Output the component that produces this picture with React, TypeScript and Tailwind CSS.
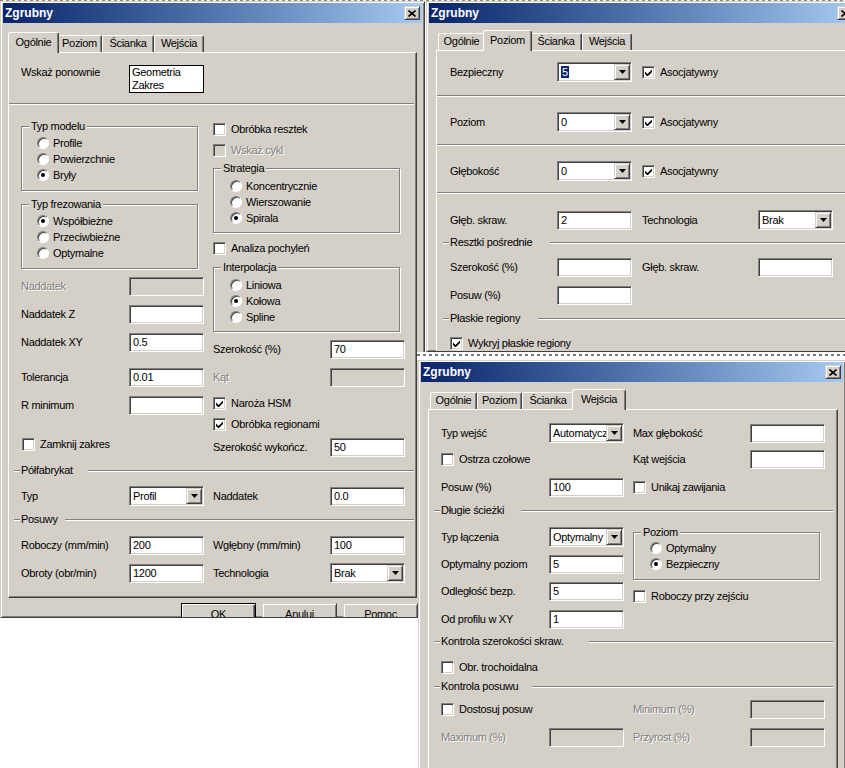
import React from 'react';

const sunken =
  'border border-t-[#808080] border-l-[#808080] border-b-white border-r-white shadow-[inset_1px_1px_0_#404040,inset_-1px_-1px_0_#d4d0c8]';
const raised =
  'border border-t-[#d4d0c8] border-l-[#d4d0c8] border-b-[#404040] border-r-[#404040] shadow-[inset_1px_1px_0_#fff,inset_-1px_-1px_0_#808080]';
const panel =
  'bg-[#d4d0c8] border border-t-white border-l-white border-r-[#404040] border-b-[#404040] shadow-[inset_-1px_-1px_0_#808080]';
const etch = 'h-[2px] border-t border-t-[#808080] border-b border-b-white';
const dis = 'text-[#808080] [text-shadow:1px_1px_0_#fff]';

const TABS = ['Ogólnie', 'Poziom', 'Ścianka', 'Wejścia'];
const TAB_W = ['w-[47px]', 'w-[45px]', 'w-[52px]', 'w-[50px]'];
const TAB_W_SEL = ['w-[51px]', 'w-[49px]', 'w-[56px]', 'w-[54px]'];

function Win({ className, children }: { className: string; children: React.ReactNode }) {
  return (
    <div
      className={`absolute overflow-hidden bg-[#d4d0c8] border border-t-[#d4d0c8] border-l-[#d4d0c8] border-r-[#404040] border-b-[#404040] shadow-[inset_1px_1px_0_#fff,inset_-1px_-1px_0_#808080] px-[2px] pt-[1px] ${className}`}
    >
      {children}
    </div>
  );
}

function TitleBar() {
  return (
    <div className="h-[20px] flex items-center justify-between bg-linear-to-r from-[#0a246a] to-[#a6caf0] pl-[2px] pr-[2px]">
      <span className="text-white font-bold text-[12px] tracking-normal">Zgrubny</span>
      <div className={`w-[16px] h-[14px] flex items-center justify-center bg-[#d4d0c8] ${raised}`}>
        <svg width="8" height="7" viewBox="0 0 8 7">
          <path d="M0.5 0.5 L7.5 6.5 M7.5 0.5 L0.5 6.5" stroke="#000" strokeWidth="1.6" />
        </svg>
      </div>
    </div>
  );
}

function Tabs({ active }: { active: number }) {
  return (
    <div className="flex items-end h-[20px] pl-[2px]">
      {TABS.map((t, i) =>
        i === active ? (
          <div
            key={t}
            className={`${TAB_W_SEL[i]} h-[21px] -mx-[2px] -mb-[1px] relative z-10 bg-[#d4d0c8] border-l border-t border-r border-l-white border-t-white border-r-[#404040] rounded-t-[3px] shadow-[inset_-1px_0_0_#808080] flex justify-center pt-[3px] whitespace-nowrap`}
          >
            {t}
          </div>
        ) : (
          <div
            key={t}
            className={`${TAB_W[i]} h-[17px] bg-[#d4d0c8] border-l border-t border-r border-l-white border-t-white border-r-[#404040] rounded-t-[2px] shadow-[inset_-1px_0_0_#808080] flex justify-center pt-[1px] whitespace-nowrap`}
          >
            {t}
          </div>
        )
      )}
    </div>
  );
}

function Lbl({ children, className = '', disabled = false }: { children: React.ReactNode; className?: string; disabled?: boolean }) {
  return <span className={`shrink-0 whitespace-nowrap ${disabled ? dis : ''} ${className}`}>{children}</span>;
}

function Edit({ value = '', disabled = false }: { value?: string; disabled?: boolean }) {
  return (
    <div className={`w-[75px] h-[19px] shrink-0 flex items-center pl-[3px] ${sunken} ${disabled ? 'bg-[#d4d0c8]' : 'bg-white'}`}>
      {value}
    </div>
  );
}

function Combo({ value, selected = false }: { value: string; selected?: boolean }) {
  return (
    <div className={`w-[75px] h-[20px] shrink-0 flex items-center bg-white p-[1px] ${sunken}`}>
      <div className="flex-1 overflow-hidden whitespace-nowrap pl-[2px]">
        {selected ? <span className="bg-[#0a246a] text-white px-[1px]">{value}</span> : value}
      </div>
      <div className={`w-[16px] h-full shrink-0 flex items-center justify-center bg-[#d4d0c8] ${raised}`}>
        <svg width="7" height="4" viewBox="0 0 7 4">
          <path d="M0 0h7L3.5 4z" fill="#000" />
        </svg>
      </div>
    </div>
  );
}

function Check({ on = false, disabled = false }: { on?: boolean; disabled?: boolean }) {
  return (
    <div className={`w-[13px] h-[13px] shrink-0 flex items-center justify-center ${sunken} ${disabled ? 'bg-[#d4d0c8]' : 'bg-white'}`}>
      {on && (
        <svg width="7" height="7" viewBox="0 0 7 7">
          <polygon points="0,2.5 2.5,5 7,0.5 7,3 2.5,7.5 0,5" fill="#000" />
        </svg>
      )}
    </div>
  );
}

function CheckRow({ label, on = false, disabled = false }: { label: string; on?: boolean; disabled?: boolean }) {
  return (
    <div className="flex items-center h-[13px]">
      <Check on={on} disabled={disabled} />
      <span className={`ml-[5px] whitespace-nowrap ${disabled ? dis : ''}`}>{label}</span>
    </div>
  );
}

function Radio({ on = false }: { on?: boolean }) {
  return (
    <div className="w-[12px] h-[12px] shrink-0 rounded-full border border-t-[#808080] border-l-[#808080] border-b-white border-r-white bg-white shadow-[inset_1px_1px_0_#404040] flex items-center justify-center">
      {on && <div className="w-[4px] h-[4px] rounded-full bg-black" />}
    </div>
  );
}

function RadioRow({ label, on = false }: { label: string; on?: boolean }) {
  return (
    <div className="flex items-center h-[16px]">
      <Radio on={on} />
      <span className="ml-[4px] whitespace-nowrap">{label}</span>
    </div>
  );
}

function Group({ title, className, children }: { title: string; className: string; children: React.ReactNode }) {
  return (
    <div className={`relative shrink-0 border border-[#808080] shadow-[inset_1px_1px_0_#fff,1px_1px_0_#fff] ${className}`}>
      <span className="absolute -top-[7px] left-[7px] px-[2px] bg-[#d4d0c8] whitespace-nowrap">{title}</span>
      {children}
    </div>
  );
}

function Sep({ label, labelW, className }: { label: string; labelW: string; className: string }) {
  return (
    <div className={`flex items-center h-[13px] -ml-[7px] ${className}`}>
      <div className={`w-[6px] ${etch}`} />
      <span className={`ml-[1px] shrink-0 whitespace-nowrap ${labelW}`}>{label}</span>
      <div className={`flex-1 ${etch}`} />
    </div>
  );
}

function Button({ label, def = false }: { label: string; def?: boolean }) {
  return (
    <div
      className={`w-[75px] h-[23px] flex items-center justify-center bg-[#d4d0c8] ${
        def
          ? 'border border-black shadow-[inset_1px_1px_0_#fff,inset_-1px_-1px_0_#404040,inset_-2px_-2px_0_#808080]'
          : raised
      }`}
    >
      {label}
    </div>
  );
}

function LevelRow({ label, value, selected = false, className }: { label: string; value: string; selected?: boolean; className: string }) {
  return (
    <div className={`flex items-center h-[20px] ${className}`}>
      <Lbl className="w-[107px]">{label}</Lbl>
      <Combo value={value} selected={selected} />
      <div className="ml-[10px]">
        <CheckRow label="Asocjatywny" on />
      </div>
    </div>
  );
}

function General() {
  return (
    <Win className="left-0 top-[1px] w-[425px] h-[617px]">
      <TitleBar />
      <div className="mt-[9px] ml-[5px] mr-[5px]">
        <Tabs active={0} />
        <div className={`${panel} h-[546px] px-[12px] flex flex-col`}>
          <div className="flex items-start mt-[12px]">
            <Lbl className="w-[108px] pt-[1px]">Wskaż ponownie</Lbl>
            <div className="w-[75px] h-[28px] bg-white border border-black pl-[2px]">
              <div>Geometria</div>
              <div>Zakres</div>
            </div>
          </div>
          <div className={`mt-[10px] -ml-[12px] -mr-[10px] ${etch}`} />

          <div className="flex">
            <div className="w-[192px] shrink-0 flex flex-col">
              <Group title="Typ modelu" className="mt-[21px] w-[177px] h-[65px] pt-[8px] pl-[15px]">
                <RadioRow label="Profile" />
                <RadioRow label="Powierzchnie" />
                <RadioRow label="Bryły" on />
              </Group>
              <Group title="Typ frezowania" className="mt-[13px] w-[177px] h-[65px] pt-[8px] pl-[15px]">
                <RadioRow label="Współbieżne" on />
                <RadioRow label="Przeciwbieżne" />
                <RadioRow label="Optymalne" />
              </Group>
              <div className="flex items-center mt-[8px]">
                <Lbl className="w-[108px]" disabled>Naddatek</Lbl>
                <Edit disabled />
              </div>
              <div className="flex items-center mt-[9px]">
                <Lbl className="w-[108px]">Naddatek Z</Lbl>
                <Edit />
              </div>
              <div className="flex items-center mt-[9px]">
                <Lbl className="w-[108px]">Naddatek XY</Lbl>
                <Edit value="0.5" />
              </div>
              <div className="flex items-center mt-[16px]">
                <Lbl className="w-[108px]">Tolerancja</Lbl>
                <Edit value="0.01" />
              </div>
              <div className="flex items-center mt-[9px]">
                <Lbl className="w-[108px]">R minimum</Lbl>
                <Edit />
              </div>
              <div className="mt-[23px] ml-[1px]">
                <CheckRow label="Zamknij zakres" />
              </div>
            </div>

            <div className="flex-1 flex flex-col">
              <div className="mt-[18px]">
                <CheckRow label="Obróbka resztek" />
              </div>
              <div className="mt-[8px]">
                <CheckRow label="Wskaż cykl" disabled />
              </div>
              <Group title="Strategia" className="mt-[11px] w-[187px] h-[65px] pt-[9px] pl-[16px]">
                <RadioRow label="Koncentrycznie" />
                <RadioRow label="Wierszowanie" />
                <RadioRow label="Spirala" on />
              </Group>
              <div className="mt-[9px]">
                <CheckRow label="Analiza pochyleń" />
              </div>
              <Group title="Interpolacja" className="mt-[12px] w-[187px] h-[65px] pt-[9px] pl-[16px]">
                <RadioRow label="Liniowa" />
                <RadioRow label="Kołowa" on />
                <RadioRow label="Spline" />
              </Group>
              <div className="flex items-center mt-[8px]">
                <Lbl className="w-[117px]">Szerokość (%)</Lbl>
                <Edit value="70" />
              </div>
              <div className="flex items-center mt-[9px]">
                <Lbl className="w-[117px]" disabled>Kąt</Lbl>
                <Edit disabled />
              </div>
              <div className="mt-[10px]">
                <CheckRow label="Naroża HSM" on />
              </div>
              <div className="mt-[8px]">
                <CheckRow label="Obróbka regionami" on />
              </div>
              <div className="flex items-center mt-[7px]">
                <Lbl className="w-[117px]">Szerokość wykończ.</Lbl>
                <Edit value="50" />
              </div>
            </div>
          </div>

          <Sep label="Półfabrykat" labelW="w-[67px]" className="mt-[7px] -mr-[10px]" />
          <div className="flex items-center h-[20px] mt-[9px]">
            <Lbl className="w-[108px]">Typ</Lbl>
            <Combo value="Profil" />
            <Lbl className="ml-[9px] w-[117px]">Naddatek</Lbl>
            <Edit value="0.0" />
          </div>
          <Sep label="Posuwy" labelW="w-[44px]" className="mt-[7px] -mr-[10px]" />
          <div className="flex items-center mt-[10px]">
            <Lbl className="w-[108px]">Roboczy (mm/min)</Lbl>
            <Edit value="200" />
            <Lbl className="ml-[9px] w-[117px]">Wgłębny (mm/min)</Lbl>
            <Edit value="100" />
          </div>
          <div className="flex items-center h-[20px] mt-[8px]">
            <Lbl className="w-[108px]">Obroty (obr/min)</Lbl>
            <Edit value="1200" />
            <Lbl className="ml-[9px] w-[117px]">Technologia</Lbl>
            <Combo value="Brak" />
          </div>
        </div>
        <div className="flex justify-end gap-[6px] mt-[5px] -mr-[1px]">
          <Button label="OK" def />
          <Button label="Anuluj" />
          <Button label="Pomoc" />
        </div>
      </div>
    </Win>
  );
}

function Level() {
  return (
    <Win className="left-[426px] top-[1px] w-[432px] h-[351px]">
      <TitleBar />
      <div className="mt-[7px] ml-[7px]">
        <Tabs active={1} />
        <div className={`${panel} w-[420px] h-[330px] pl-[13px] flex flex-col`}>
          <LevelRow label="Bezpieczny" value="5" selected className="mt-[11px]" />
          <div className={`mt-[13px] -ml-[13px] ${etch}`} />
          <LevelRow label="Poziom" value="0" className="mt-[15px]" />
          <div className={`mt-[12px] -ml-[13px] ${etch}`} />
          <LevelRow label="Głębokość" value="0" className="mt-[15px]" />
          <div className={`mt-[11px] -ml-[13px] ${etch}`} />
          <div className="flex items-center h-[20px] mt-[16px]">
            <Lbl className="w-[107px]">Głęb. skraw.</Lbl>
            <Edit value="2" />
            <Lbl className="ml-[10px] w-[116px]">Technologia</Lbl>
            <Combo value="Brak" />
          </div>
          <Sep label="Resztki pośrednie" labelW="w-[100px]" className="mt-[6px]" />
          <div className="flex items-center mt-[9px]">
            <Lbl className="w-[107px]">Szerokość (%)</Lbl>
            <Edit />
            <Lbl className="ml-[10px] w-[116px]">Głęb. skraw.</Lbl>
            <Edit />
          </div>
          <div className="flex items-center mt-[9px]">
            <Lbl className="w-[107px]">Posuw (%)</Lbl>
            <Edit />
          </div>
          <Sep label="Płaskie regiony" labelW="w-[88px]" className="mt-[7px]" />
          <div className="mt-[12px]">
            <CheckRow label="Wykryj płaskie regiony" on />
          </div>
        </div>
      </div>
    </Win>
  );
}

function Entries() {
  return (
    <Win className="left-[418px] top-[360px] w-[428px] h-[430px]">
      <TitleBar />
      <div className="mt-[7px] ml-[7px] mr-[5px]">
        <Tabs active={3} />
        <div className={`${panel} h-[410px] px-[12px] flex flex-col`}>
          <div className="flex items-center h-[20px] mt-[13px]">
            <Lbl className="w-[108px]">Typ wejść</Lbl>
            <Combo value="Automatycznie" />
            <Lbl className="ml-[9px] w-[117px]">Max głębokość</Lbl>
            <Edit />
          </div>
          <div className="flex items-center h-[19px] mt-[7px]">
            <div className="w-[192px] shrink-0">
              <CheckRow label="Ostrza czołowe" />
            </div>
            <Lbl className="w-[117px]">Kąt wejścia</Lbl>
            <Edit />
          </div>
          <div className="flex items-center h-[19px] mt-[9px]">
            <Lbl className="w-[108px]">Posuw (%)</Lbl>
            <Edit value="100" />
            <div className="ml-[9px]">
              <CheckRow label="Unikaj zawijania" />
            </div>
          </div>
          <Sep label="Długie ścieżki" labelW="w-[80px]" className="mt-[7px] -mr-[8px]" />

          <div className="flex">
            <div className="w-[192px] shrink-0 flex flex-col">
              <div className="flex items-center h-[20px] mt-[10px]">
                <Lbl className="w-[108px]">Typ łączenia</Lbl>
                <Combo value="Optymalny" />
              </div>
              <div className="flex items-center mt-[8px]">
                <Lbl className="w-[108px]">Optymalny poziom</Lbl>
                <Edit value="5" />
              </div>
              <div className="flex items-center mt-[8px]">
                <Lbl className="w-[108px]">Odległość bezp.</Lbl>
                <Edit value="5" />
              </div>
              <div className="flex items-center mt-[9px]">
                <Lbl className="w-[108px]">Od profilu w XY</Lbl>
                <Edit value="1" />
              </div>
            </div>
            <div className="flex-1 flex flex-col">
              <Group title="Poziom" className="mt-[15px] w-[187px] h-[48px] pt-[7px] pl-[16px]">
                <RadioRow label="Optymalny" />
                <RadioRow label="Bezpieczny" on />
              </Group>
              <div className="mt-[10px]">
                <CheckRow label="Roboczy przy zejściu" />
              </div>
            </div>
          </div>

          <Sep label="Kontrola szerokości skraw." labelW="w-[148px]" className="mt-[6px] -mr-[8px]" />
          <div className="mt-[13px]">
            <CheckRow label="Obr. trochoidalna" />
          </div>
          <Sep label="Kontrola posuwu" labelW="w-[91px]" className="mt-[6px] -mr-[8px]" />
          <div className="flex items-center h-[19px] mt-[7px]">
            <div className="w-[192px] shrink-0">
              <CheckRow label="Dostosuj posuw" />
            </div>
            <Lbl className="w-[117px]" disabled>Minimum (%)</Lbl>
            <Edit disabled />
          </div>
          <div className="flex items-center h-[19px] mt-[9px]">
            <Lbl className="w-[108px]" disabled>Maximum (%)</Lbl>
            <Edit disabled />
            <Lbl className="ml-[9px] w-[117px]" disabled>Przyrost (%)</Lbl>
            <Edit disabled />
          </div>
        </div>
      </div>
    </Win>
  );
}

export default function App() {
  return (
    <div className="relative w-[845px] h-[768px] overflow-hidden bg-white text-black text-[11px] leading-[13px] tracking-[-0.3px] font-['Liberation_Sans',Arial,sans-serif]">
      <div className="absolute left-0 top-0 w-full h-[1px] bg-[image:repeating-linear-gradient(90deg,#888_0_3px,transparent_3px_6px)]" />
      <General />
      <Level />
      <div className="absolute left-[417px] top-[352px] w-[428px] h-[8px] bg-white pt-[2px]">
        <div className="h-[2px] bg-[image:repeating-linear-gradient(90deg,#777_0_3px,transparent_3px_6px)]" />
      </div>
      <Entries />
    </div>
  );
}
